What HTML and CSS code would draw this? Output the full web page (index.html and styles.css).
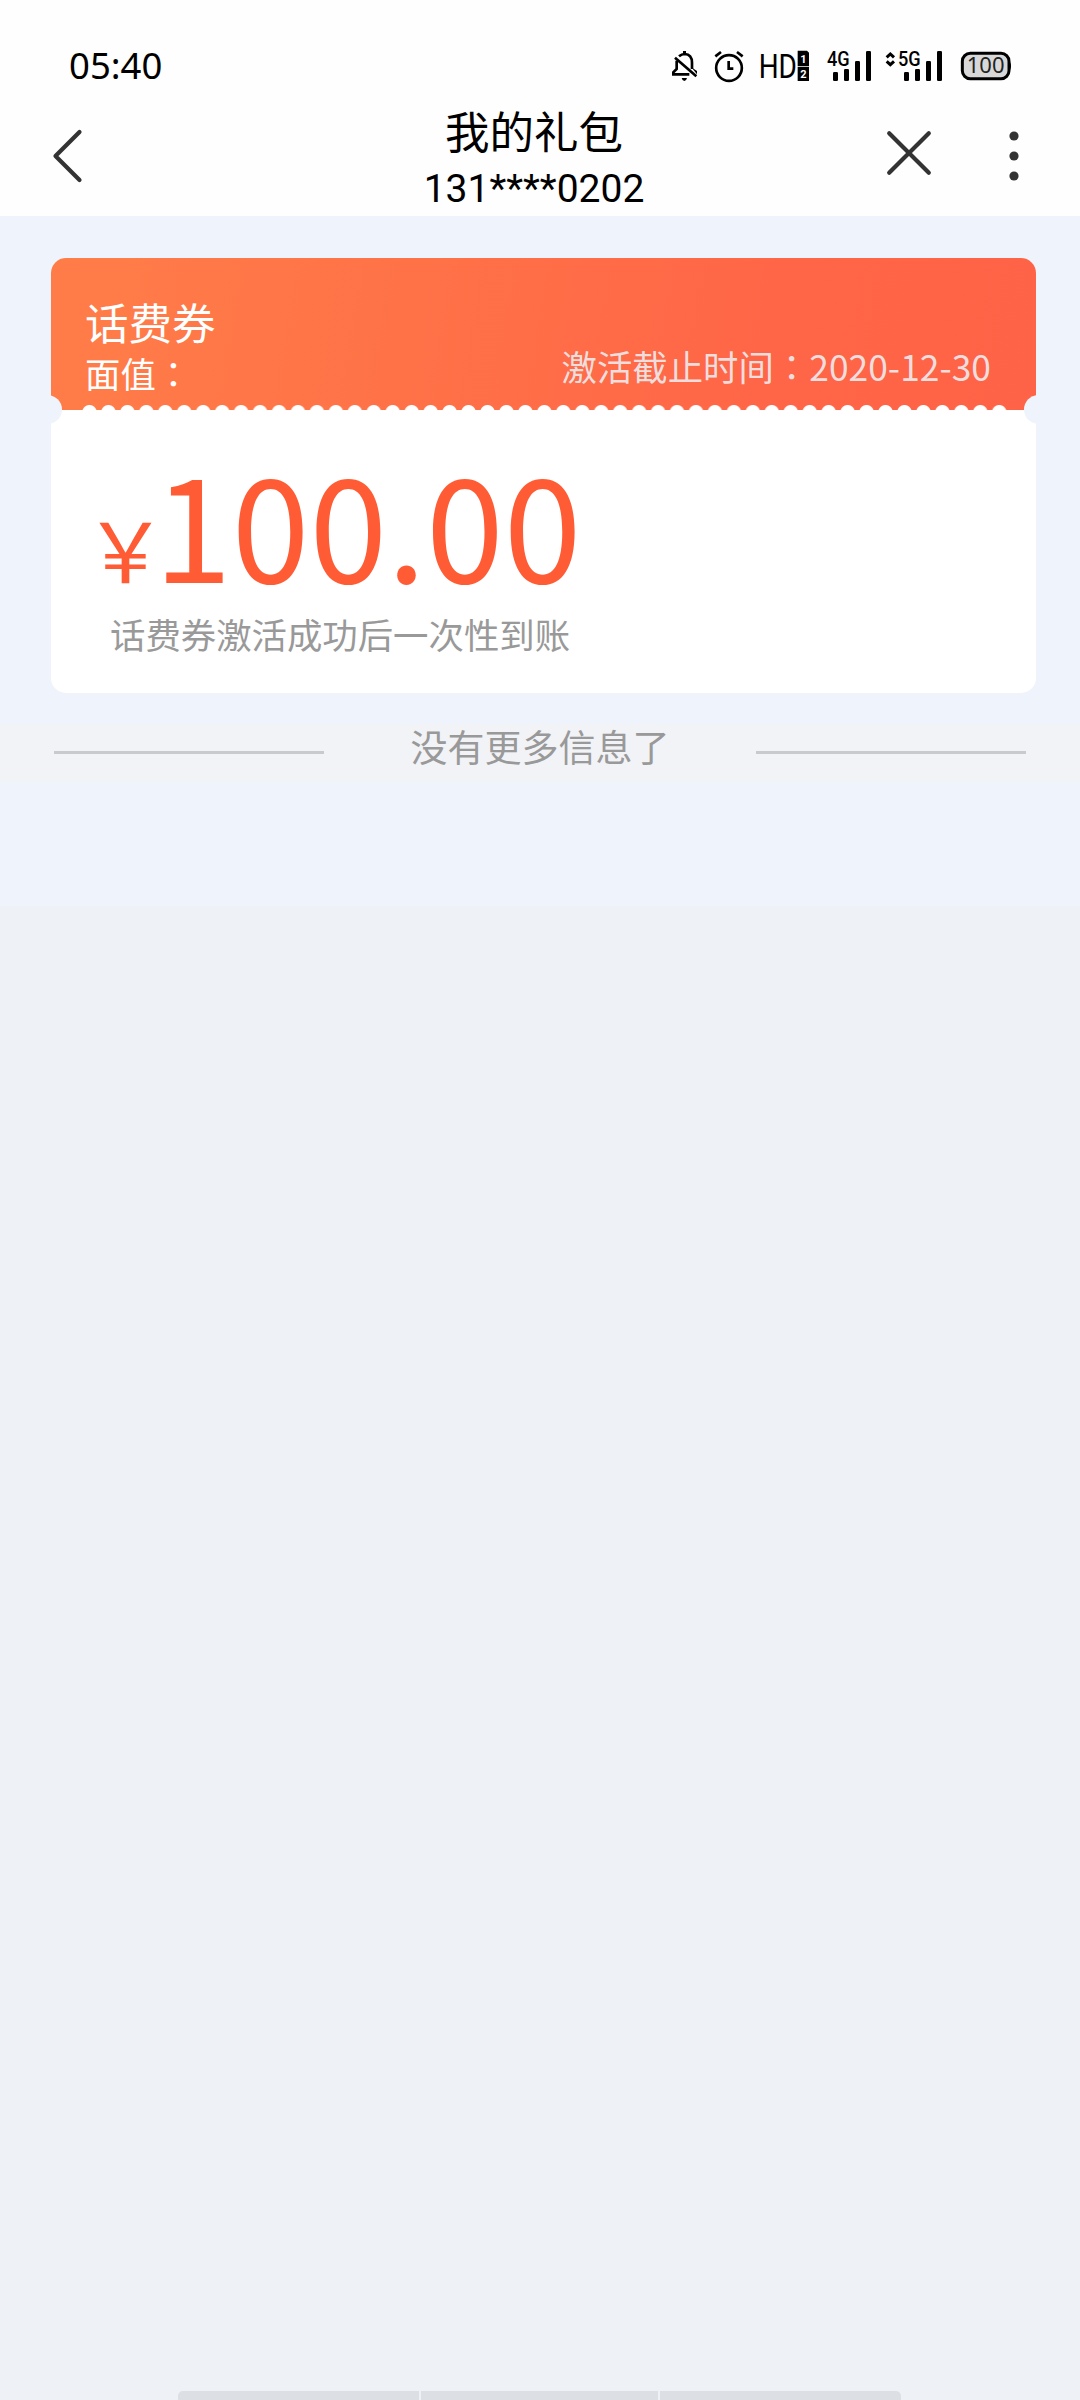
FILE: index.html
```html
<!DOCTYPE html>
<html lang="zh-CN">
<head>
<meta charset="utf-8">
<title>我的礼包</title>
<link rel="stylesheet" href="styles.css">
</head>
<body>
<div class="screen">
  <header class="top">
    <div class="status">
      <span class="clock">05:40</span>
      <div class="status-icons">
        <svg class="icon" width="30" height="40" viewBox="90 45 90 120">
          <g fill="none" stroke="#000" stroke-width="8">
            <path d="M117 79 C124 73 129 72 134 72 C150 73 156 84 156 98 V117"/>
            <path d="M110 92 V117 L100 127 V133 H148"/>
            <path d="M105 83 L169 139"/>
          </g>
          <path d="M129 63 H138 V72 H129Z M125 144 H141 Q139 153 133 153 Q127 153 125 144Z M154 112 L171 123 V133Z"/>
        </svg>
        <svg class="icon icon-alarm" width="30" height="40" viewBox="222 45 90 120">
          <circle cx="267" cy="114" r="38.500" fill="none" stroke="#000" stroke-width="8"/>
          <path d="M226 79 L243 66 M308 79 L291 66 M266 93 V116 H280" fill="none" stroke="#000" stroke-width="8"/>
        </svg>
        <svg class="icon icon-hd" width="54" height="40" viewBox="348 45 162 120">
          <text x="356" y="144" class="hd-text" textLength="115" lengthAdjust="spacingAndGlyphs">HD</text>
          <path d="M473 62 H501 L507 68 V109 H473Z M473 111 H507 V153 H473Z"/>
          <text x="490" y="98" class="sim-text">1</text>
          <text x="490" y="144" class="sim-text">2</text>
        </svg>
        <svg class="icon icon-4g" width="46" height="40" viewBox="558 45 138 120">
          <text x="561" y="107" class="net-text" textLength="68" lengthAdjust="spacingAndGlyphs">4G</text>
          <rect x="579" y="126" width="15" height="27" rx="4"/>
          <rect x="612" y="117" width="15" height="36" rx="4"/>
          <rect x="645" y="93" width="15" height="60" rx="4"/>
          <rect x="678" y="63" width="15" height="90" rx="4"/>
        </svg>
        <svg class="icon icon-5g" width="58" height="40" viewBox="735 45 174 120">
          <path d="M740 82 L751 72 L762 82 M740 94 L751 104 L762 94" fill="none" stroke="#000" stroke-width="9"/>
          <text x="774" y="107" class="net-text" textLength="68" lengthAdjust="spacingAndGlyphs">5G</text>
          <rect x="792" y="126" width="15" height="27" rx="4"/>
          <rect x="825" y="117" width="15" height="36" rx="4"/>
          <rect x="858" y="93" width="15" height="60" rx="4"/>
          <rect x="891" y="63" width="15" height="90" rx="4"/>
        </svg>
        <svg class="icon icon-battery" width="52" height="40" viewBox="960 45 156 120">
          <rect x="967" y="70" width="140" height="76" rx="24" fill="#d8d8d8" stroke="#000" stroke-width="9"/>
          <path d="M1106 92 Q1113 96 1113 108 Q1113 120 1106 124Z"/>
          <text x="980" y="130" class="battery-text" textLength="114">100</text>
        </svg>
      </div>
    </div>
    <div class="titlebar">
      <svg class="back" width="32" height="56" viewBox="0 0 32 56">
        <path d="M28.500 4 L4.500 28 L28.500 52" />
      </svg>
      <div class="heading">
        <h1 class="title">我的礼包</h1>
        <p class="phone">131****0202</p>
      </div>
      <svg class="close" width="46" height="46" viewBox="0 0 46 46">
        <path d="M3.200 3.200 L42.800 42.800 M42.800 3.200 L3.200 42.800"/>
      </svg>
      <svg class="more" width="10" height="50" viewBox="0 0 10 50">
        <circle cx="5" cy="5" r="4.600"/><circle cx="5" cy="25" r="4.600"/><circle cx="5" cy="45" r="4.600"/>
      </svg>
    </div>
  </header>
  <main class="content">
    <section class="coupon">
      <div class="coupon-head">
        <div class="coupon-info">
          <h2 class="coupon-name">话费券</h2>
          <p class="face">面值<span class="colon" lang="zh-TW">：</span></p>
        </div>
        <p class="deadline">激活截止时间<span class="colon" lang="zh-TW">：</span>2020-12-30</p>
        <div class="scallops"></div>
      </div>
      <div class="coupon-body">
        <p class="amount"><span class="yen">￥</span><span class="number">100.00</span></p>
        <p class="note">话费券激活成功后一次性到账</p>
      </div>
      <span class="notch notch-left"></span>
      <span class="notch notch-right"></span>
    </section>
    <div class="end">
      <span class="rule"></span>
      <span class="end-text">没有更多信息了</span>
      <span class="rule"></span>
    </div>
  </main>
  <footer class="navhint"><span></span><span></span><span></span></footer>
</div>
</body>
</html>
```
FILE: styles.css
```css
* { box-sizing: border-box; margin: 0; padding: 0; }
body { background: #eef1f6; font-family: "Noto Sans CJK SC", sans-serif; }
h1, h2 { font-weight: 400; }
svg { display: block; flex: none; }
.screen { width: 1080px; height: 2400px; display: flex; flex-direction: column; overflow: hidden; }

.top { height: 216px; background: #fefefe; }
.status { height: 100px; padding: 0 68px; display: flex; justify-content: space-between; }
.clock { font: 36.500px/40px "Noto Sans", sans-serif; padding: 45px 0 0 1px; color: #000; }
.status-icons { display: flex; padding-top: 45px; }
.icon-alarm { margin-left: 14px; }
.icon-hd { margin-left: 12px; }
.icon-4g { margin-left: 16px; }
.icon-5g { margin-left: 13px; }
.icon-battery { margin-left: 17px; }
.hd-text { font: 98px Roboto, sans-serif; }
.sim-text { font: bold 33px Roboto, sans-serif; fill: #fff; text-anchor: middle; }
.net-text { font: 500 59px Roboto, sans-serif; }
.battery-text { font: 66px "Noto Sans", sans-serif; fill: #222; }

.titlebar { height: 116px; display: flex; align-items: flex-start; }
.back { margin: 28px 0 0 51px; }
.back path, .close path { fill: none; stroke: #333; stroke-width: 4.200; stroke-linecap: round; stroke-linejoin: round; }
.heading { width: 260px; margin-left: 321px; text-align: center; color: #000; }
.title { font-size: 44.500px; line-height: 60px; }
.phone { font: 39px/46px Roboto, sans-serif; margin-top: 6px; }
.close { margin: 30px 0 0 222px; }
.more { margin: 31px 0 0 77px; fill: #333; }

.content { height: 690px; padding-top: 42px; background: #eff3fb; }
.coupon { position: relative; width: 985px; height: 435px; margin-left: 51px; border-radius: 15px; overflow: hidden; background: #fff; }
.coupon-head { position: relative; height: 152px; padding: 0 45px 0 34px; display: flex; justify-content: space-between; color: #fff; background: linear-gradient(100deg, #ff7c48 5%, #ff6547 75%, #ff6347); }
.coupon-name { font-size: 43.500px; line-height: 60px; margin-top: 34px; }
.face { font-size: 35.400px; line-height: 44px; margin-top: -1px; }
.deadline { font-size: 35.400px; line-height: 44px; margin-top: 86px; color: #eedddd; }
.colon { font-family: "Noto Sans CJK TC", sans-serif; }
.scallops { position: absolute; left: 29px; top: 146px; width: 929.300px; height: 6px; background: radial-gradient(circle at 50% 8.200px, #fff 6.700px, rgba(255, 255, 255, 0) 7.700px) 0 0 / 18.965px 6px repeat-x; }
.notch { position: absolute; width: 29px; height: 29px; border-radius: 50%; background: #eff3fb; top: 137px; }
.notch-left { left: -18px; }
.notch-right { right: -17px; }
.amount { display: flex; align-items: baseline; color: #ff5c35; height: 199px; padding: 12px 0 0 33px; }
.yen { width: 70px; font-size: 83px; line-height: 200px; }
.number { font-size: 140px; line-height: 200px; }
.note { font-size: 35.400px; line-height: 50px; color: #999; padding-left: 59px; }
.end { height: 58px; margin-top: 31px; padding: 0 54px 2px; display: flex; align-items: center; justify-content: space-between; background: #f2f3f7; }
.rule { width: 270px; height: 3px; background: #c8cacd; }
.end-text { font-size: 37px; line-height: 50px; margin-top: -12px; color: #999; }
.navhint { margin: auto 0 0 178px; width: 723px; height: 9px; display: grid; grid-template-columns: 241px 237px 241px; gap: 2px; border-radius: 5px 5px 0 0; overflow: hidden; }
.navhint span { background: #dce0e5; }
```
